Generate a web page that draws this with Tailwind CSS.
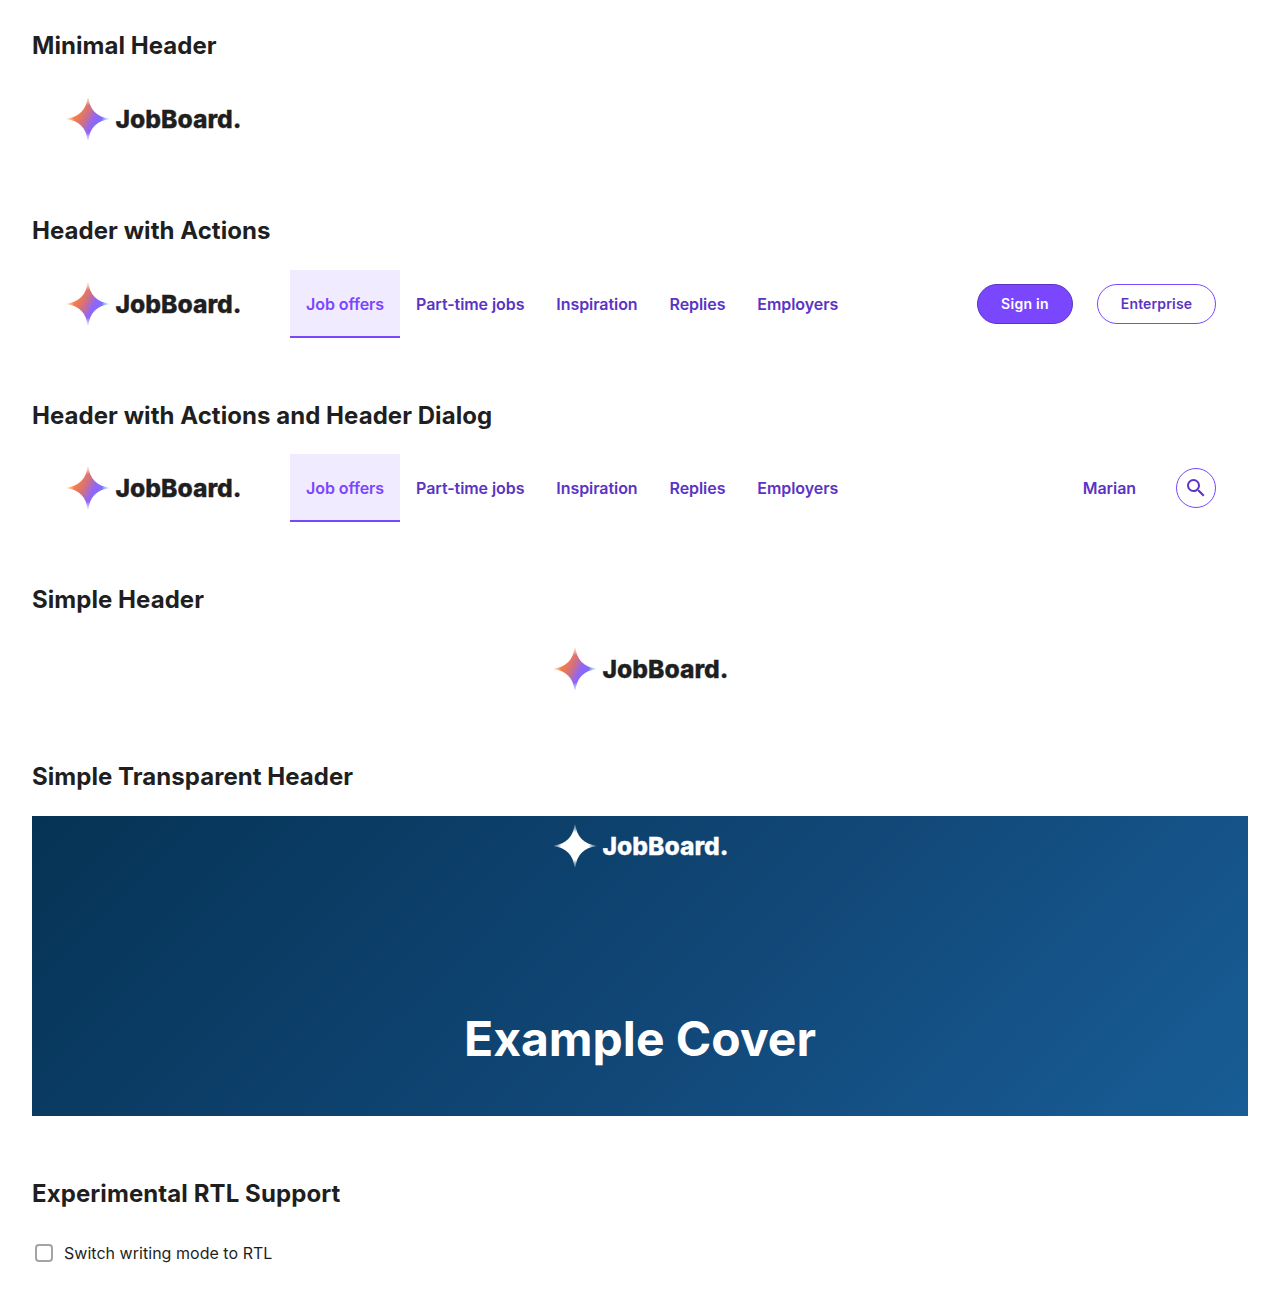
<!DOCTYPE html>
<html lang="en">
<head>
<meta charset="utf-8">
<title>Header</title>
<script src="https://cdn.jsdelivr.net/npm/@tailwindcss/browser@4"></script>
</head>
<body class="bg-white font-['Inter',sans-serif] text-[#1f1f1f]">
<svg class="absolute size-0" aria-hidden="true">
  <defs>
    <linearGradient id="spark" gradientUnits="userSpaceOnUse" x1="7" y1="21" x2="42" y2="39">
      <stop offset="0" stop-color="#ff7f3a"/><stop offset=".2" stop-color="#f57c48"/><stop offset=".42" stop-color="#cf6f84"/><stop offset=".63" stop-color="#8f66f8"/><stop offset=".8" stop-color="#7f6cff"/><stop offset="1" stop-color="#4cc9e8"/>
    </linearGradient>
    <radialGradient id="fade" gradientUnits="userSpaceOnUse" cx="24" cy="30" r="22">
      <stop offset=".62" stop-color="#fff"/><stop offset="1" stop-color="#fff" stop-opacity="0"/>
    </radialGradient>
    <mask id="tips" maskUnits="userSpaceOnUse" x="0" y="0" width="50" height="60"><rect width="50" height="60" fill="url(#fade)"/></mask>
    <path id="star" d="M23.3 8.5h1.4C25 20 33.5 28.9 45.5 29.4v1.2C33.5 31.1 25 40 24.7 51.5h-1.4C23 40 14.5 31.1 2.5 30.6v-1.2C14.5 28.9 23 20 23.3 8.5Z"/>
    <symbol id="logo" viewBox="0 0 180 60">
      <use href="#star" fill="url(#spark)" mask="url(#tips)"/>
      <text x="51.5" y="39.1" font-size="25" font-weight="800" textLength="126" lengthAdjust="spacingAndGlyphs" fill="#1f1f1f" stroke="#1f1f1f" stroke-width=".3">JobBoard.</text>
    </symbol>
    <symbol id="logo-white" viewBox="0 0 180 60">
      <use href="#star" fill="#fff" mask="url(#tips)"/>
      <text x="51.5" y="39.1" font-size="25" font-weight="800" textLength="126" lengthAdjust="spacingAndGlyphs" fill="#fff" stroke="#fff" stroke-width=".3">JobBoard.</text>
    </symbol>
  </defs>
</svg>
<main class="px-8 pt-[30.3px]">
  <section class="mb-[61.6px]">
    <h2 class="mb-[23px] text-2xl leading-8 font-bold tracking-[0.05px]">Minimal Header</h2>
    <header class="flex h-[68px] items-center px-8"><svg class="h-[60px] w-[180px]"><use href="#logo"/></svg></header>
  </section>
  <section class="mb-[62.1px]">
    <h2 class="mb-[23px] text-2xl leading-8 font-bold tracking-[0.05px]">Header with Actions</h2>
    <header class="flex h-[68px] items-center px-8">
      <svg class="h-[60px] w-[180px]"><use href="#logo"/></svg>
      <nav class="ml-[46px] flex h-full text-base font-semibold tracking-[-0.07px] text-[#5b34c4]">
        <a class="flex items-center border-b-2 border-[#7a47ff] bg-[#f1ebff] px-4 pt-0.5 text-[#7a47ff]">Job offers</a>
        <a class="flex items-center px-4">Part-time jobs</a>
        <a class="flex items-center px-4">Inspiration</a>
        <a class="flex items-center px-4">Replies</a>
        <a class="flex items-center px-4">Employers</a>
      </nav>
      <div class="ml-auto flex gap-6 text-sm font-semibold">
        <button class="h-10 w-24 rounded-full border border-[#5b34c4] bg-[#7a47ff] tracking-[0.28px] text-white">Sign in</button>
        <button class="h-10 w-[119px] rounded-full border border-[#7a47ff] tracking-[0.14px] text-[#5b34c4]">Enterprise</button>
      </div>
    </header>
  </section>
  <section class="mb-[61.6px]">
    <h2 class="mb-[22.5px] text-2xl leading-8 font-bold tracking-[0.05px]">Header with Actions and Header Dialog</h2>
    <header class="flex h-[68px] items-center px-8">
      <svg class="h-[60px] w-[180px]"><use href="#logo"/></svg>
      <nav class="ml-[46px] flex h-full text-base font-semibold tracking-[-0.07px] text-[#5b34c4]">
        <a class="flex items-center border-b-2 border-[#7a47ff] bg-[#f1ebff] px-4 pt-0.5 text-[#7a47ff]">Job offers</a>
        <a class="flex items-center px-4">Part-time jobs</a>
        <a class="flex items-center px-4">Inspiration</a>
        <a class="flex items-center px-4">Replies</a>
        <a class="flex items-center px-4">Employers</a>
      </nav>
      <div class="ml-auto flex items-center gap-10 text-base font-semibold tracking-[-0.07px] text-[#5b34c4]">
        <a>Marian</a>
        <button class="flex size-10 items-center justify-center rounded-full border border-[#7a47ff]" aria-label="Search">
          <svg class="size-6" viewBox="0 0 24 24" fill="currentColor"><path d="M15.5 14h-.79l-.28-.27A6.47 6.47 0 0 0 16 9.5 6.5 6.5 0 1 0 9.5 16c1.61 0 3.09-.59 4.23-1.57l.27.28v.79l5 4.99L20.49 19l-4.99-5Zm-6 0a4.5 4.5 0 1 1 0-9 4.5 4.5 0 0 1 0 9Z"/></svg>
        </button>
      </div>
    </header>
  </section>
  <section class="mb-[61.6px]">
    <h2 class="mb-[23px] text-2xl leading-8 font-bold tracking-[0.05px]">Simple Header</h2>
    <header class="flex h-[60px] justify-center pl-0.5"><svg class="h-[60px] w-[180px]"><use href="#logo"/></svg></header>
  </section>
  <section class="mb-[62px]">
    <h2 class="mb-[23px] text-2xl leading-8 font-bold tracking-[0.05px]">Simple Transparent Header</h2>
    <div class="flex h-[300px] flex-col items-center bg-linear-[135deg,#053355,#114777_55%,#185d96] text-white">
      <header class="flex h-[60px] justify-center pl-0.5"><svg class="h-[60px] w-[180px]"><use href="#logo-white"/></svg></header>
      <div class="pt-[132px] text-5xl leading-[62px] font-bold">Example Cover</div>
    </div>
  </section>
  <section>
    <h2 class="mb-[23px] text-2xl leading-8 font-bold tracking-[0.09px]">Experimental RTL Support</h2>
    <label class="flex items-center pt-2 pl-[3px] text-base tracking-[0.03px]"><span class="mr-[11px] size-[18px] rounded-[4px] border-2 border-[#a3a3a3]"></span>Switch writing mode to RTL</label>
  </section>
</main>
</body>
</html>
